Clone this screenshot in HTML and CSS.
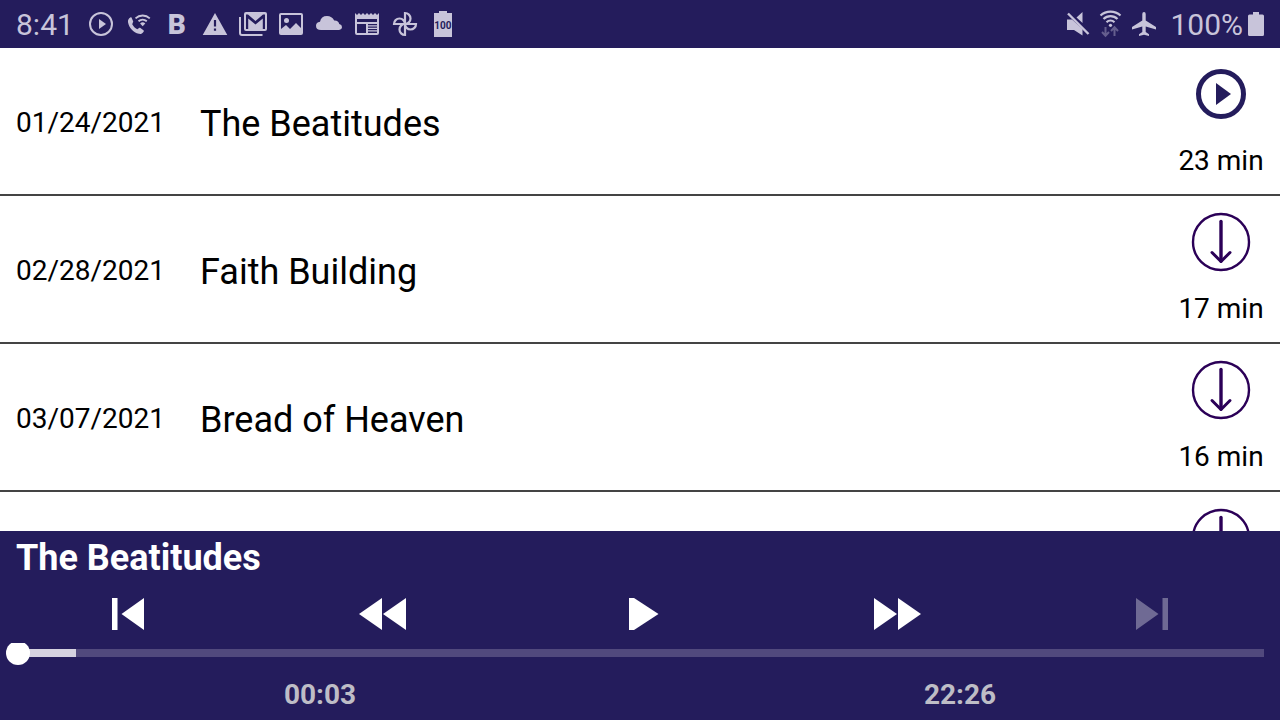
FILE: index.html
```html
<!DOCTYPE html>
<html lang="en">
<head>
<meta charset="utf-8">
<meta name="viewport" content="width=device-width, initial-scale=1">
<title>The Beatitudes</title>
<link rel="stylesheet" href="styles.css">
</head>
<body>
<svg class="sprite" aria-hidden="true">
  <symbol id="download" viewBox="0 0 60 60">
    <g fill="none" stroke="#2b0057">
      <circle cx="30" cy="30" r="28" stroke-width="2.4"/>
      <path d="M30 9.5V49" stroke-width="3.4" stroke-linecap="round"/>
      <path d="M21 40.5 30 49.5 39 40.5" stroke-width="3" stroke-linecap="round" stroke-linejoin="round"/>
    </g>
  </symbol>
</svg>

<header class="status">
  <time class="status-text">8:41</time>
  <div class="notices">
    <svg class="glyph" viewBox="0 0 28 28"><circle cx="14" cy="14" r="11" fill="none" stroke="currentColor" stroke-width="2"/><path d="M12 9v10l7-5z"/></svg>
    <svg class="glyph" viewBox="0 0 28 28"><path transform="translate(.4 4.6) scale(.9)" d="M7.6 10.8c1.4 2.6 3 4.200 5.600 5.600l2-1.600c.5-.4 1-.4 1.500 0l3.300 2.600c.6.500.7 1 .2 1.600-1.500 2-3.200 3-5.200 2.400C8.600 19.800 4 14.500 2.900 8.500 2.500 6.200 3.600 4.300 5.500 3.200c.6-.3 1.100-.2 1.400.4l1.700 3.800c.2.500.1.900-.3 1.300z"/><path d="M10.500 8.300a10.500 10.500 0 0 1 14.300 0M13.500 11.300a6.300 6.300 0 0 1 8.300 0" fill="none" stroke="currentColor" stroke-width="1.800"/><path d="M17.700 16.200l-2.600-2.600a3.700 3.700 0 0 1 5.200 0z"/></svg>
    <span class="letter">B</span>
    <svg class="glyph" viewBox="0 0 28 28"><path fill-rule="evenodd" d="M14 3 26.300 25H1.700zM12.900 10v6.500h2.200V10zm0 8.500v2.300h2.200v-2.300z"/></svg>
    <svg class="glyph" viewBox="0 0 28 28"><path d="M1 7v16q0 2 2 2h20.500" fill="none" stroke="currentColor" stroke-width="2"/><path fill-rule="evenodd" d="M7 2h19q2 0 2 2v15q0 2-2 2H7q-2 0-2-2V4q0-2 2-2zM7 4.500V19h2.200V8.500l7.300 6 7.300-6V19H26V4.500h-2L16.500 11 9 4.500z"/></svg>
    <svg class="glyph" viewBox="0 0 28 28"><path fill-rule="evenodd" d="M4 3h20q2 0 2 2v18q0 2-2 2H4q-2 0-2-2V5q0-2 2-2zm0 2v14l5-4 4 4 6-6 5 5V5z"/><circle cx="9.500" cy="10.500" r="2.500"/></svg>
    <svg class="glyph" viewBox="0 0 28 28"><path d="M6 20q-5 0-5-4.300 0-3.400 4-4Q6 6 12 6q5 0 7.200 4.500 4.300-.3 5 3.500 2.800.6 2.800 3t-3 3z"/></svg>
    <svg class="glyph" viewBox="0 0 28 28"><path fill-rule="evenodd" d="M2 3l2 2 2-2 2 2 2-2 2 2 2-2 2 2 2-2 2 2 2-2 2 2 2-2v20q0 2-2 2H4q-2 0-2-2zM4 9v3h20V9zm0 5v9h9v-9zm11 0v1.200h9V14zm0 2.500v1.200h9v-1.200zm0 2.500v1.200h9V19zm0 2.500V23h9v-1.500z"/></svg>
    <svg class="glyph" viewBox="0 0 28 28"><g fill="none" stroke="currentColor" stroke-width="2.200"><path d="M14 14V3a5.500 5.500 0 0 1 0 11z"/><path d="M14 14V3a5.500 5.500 0 0 1 0 11z" transform="rotate(90 14 14)"/><path d="M14 14V3a5.500 5.500 0 0 1 0 11z" transform="rotate(180 14 14)"/><path d="M14 14V3a5.500 5.500 0 0 1 0 11z" transform="rotate(270 14 14)"/></g></svg>
    <span class="charge">100</span>
  </div>
  <div class="system">
    <svg class="glyph" viewBox="0 0 28 28"><path d="M3 9.500h5L18.500 19v6.500L10 20H3zM18.500 2v11L12.500 7.500z"/><path d="M4 3.500 24.500 24" stroke="currentColor" stroke-width="2.400"/></svg>
    <svg class="glyph" viewBox="0 0 28 28"><path d="M3.500 5.500a15 15 0 0 1 20 0M6.500 9a10 10 0 0 1 14 0M9.500 12.200a6 6 0 0 1 8 0" fill="none" stroke="currentColor" stroke-width="2.200"/><circle cx="13.500" cy="15.300" r="1.600"/><path d="M8.500 17v8.500M5 22l3.500 3.700L12 22M17.500 26v-8.500M14 21l3.500-3.700L21 21" fill="none" stroke="currentColor" stroke-width="2" opacity=".4"/></svg>
    <svg class="glyph" viewBox="0 0 28 28"><path d="M14 2q1.700 0 1.700 2v6.500L26 17v2.500l-10.300-3V22l3.300 2.300V26l-5-1.200L9 26v-1.700l3.300-2.300v-5.500L2 19.500V17l10.300-6.500V4q0-2 1.700-2z"/></svg>
    <span class="status-text">100%</span>
    <svg class="battery" viewBox="0 0 16 28"><path d="M5 2h6v2.500h3.500q1.500 0 1.500 1.500v18.500q0 1.500-1.500 1.500h-13Q0 26 0 24.500V6q0-1.500 1.500-1.500H5z"/></svg>
  </div>
</header>

<main class="list">
  <article class="row">
    <time class="date">01/24/2021</time>
    <h2 class="title">The Beatitudes</h2>
    <div class="action">
      <button class="icon-button" type="button" aria-label="Play"><svg class="action-icon" viewBox="0 0 60 60"><circle cx="30" cy="30" r="22.500" fill="none" stroke="#241c5c" stroke-width="5"/><path d="M25 19v22l15-11z" fill="#241c5c"/></svg></button>
      <span class="length">23 min</span>
    </div>
  </article>
  <article class="row">
    <time class="date">02/28/2021</time>
    <h2 class="title">Faith Building</h2>
    <div class="action">
      <button class="icon-button" type="button" aria-label="Download"><svg class="action-icon"><use href="#download"/></svg></button>
      <span class="length">17 min</span>
    </div>
  </article>
  <article class="row">
    <time class="date">03/07/2021</time>
    <h2 class="title">Bread of Heaven</h2>
    <div class="action">
      <button class="icon-button" type="button" aria-label="Download"><svg class="action-icon"><use href="#download"/></svg></button>
      <span class="length">16 min</span>
    </div>
  </article>
  <article class="row">
    <div class="action">
      <button class="icon-button" type="button" aria-label="Download"><svg class="action-icon"><use href="#download"/></svg></button>
    </div>
  </article>
</main>

<footer class="player">
  <h1 class="now">The Beatitudes</h1>
  <div class="controls">
    <button class="control" type="button" aria-label="Previous"><svg class="control-icon" viewBox="0 0 48 32"><path d="M8 0h5.500v32H8zM40 0v32L17.500 16z"/></svg></button>
    <button class="control" type="button" aria-label="Rewind"><svg class="control-icon" viewBox="0 0 48 32"><path d="M22 0v32L-1 16zM46 0v32L23 16z"/></svg></button>
    <button class="control" type="button" aria-label="Play"><svg class="control-icon" viewBox="0 0 48 32"><path d="M13 0h5l24.500 16L18 32h-5z"/></svg></button>
    <button class="control" type="button" aria-label="Fast forward"><svg class="control-icon" viewBox="0 0 48 32"><path d="M2 0v32l23-16zM26 0v32l23-16z"/></svg></button>
    <button class="control" type="button" aria-label="Next" disabled><svg class="control-icon" viewBox="0 0 48 32"><path d="M8 0v32l22.500-16zM34.500 0H40v32h-5.500z"/></svg></button>
  </div>
  <input class="seek" type="range" min="0" max="1346" value="2" aria-label="Position" style="--buffered: 4.8%">
  <div class="times">
    <span>00:03</span>
    <span>22:26</span>
  </div>
</footer>
</body>
</html>
```
FILE: styles.css
```css
* {
  box-sizing: border-box;
}

body {
  margin: 0;
  height: 100vh;
  display: flex;
  flex-direction: column;
  font-family: Roboto, "Liberation Sans", sans-serif;
  font-size: 28px;
  color: #000;
  background: #fff;
}

h1,
h2 {
  margin: 0;
  font-size: 36px;
  line-height: 42px;
}

button {
  padding: 0;
  border: 0;
  background: none;
  color: inherit;
}

svg {
  display: block;
  fill: currentColor;
  overflow: visible;
}

.sprite {
  position: absolute;
  width: 0;
  height: 0;
}

.status {
  flex: none;
  display: flex;
  align-items: center;
  gap: 13px;
  padding: 0 16px;
  height: 48px;
  background: #241c5c;
  color: #c8c4da;
}

.status-text {
  padding-top: 2px;
  font-size: 30px;
  line-height: 46px;
}

.notices {
  display: flex;
  align-items: center;
  gap: 10px;
}

.glyph {
  width: 28px;
  height: 28px;
}

.letter {
  width: 28px;
  padding-top: 2px;
  text-align: center;
  font-weight: 900;
  line-height: 28px;
}

.charge {
  width: 18px;
  margin: 0 5px;
  padding-top: 4px;
  font-size: 10px;
  font-weight: 700;
  line-height: 22px;
  text-align: center;
  color: #241c5c;
  background:
    linear-gradient(#c8c4da, #c8c4da) center top / 8px 3px no-repeat,
    linear-gradient(#c8c4da, #c8c4da) center bottom / 100% 24px no-repeat;
}

.system {
  display: flex;
  align-items: center;
  gap: 5px;
  margin-left: auto;
}

.system .status-text {
  margin-left: 7px;
}

.battery {
  width: 16px;
  height: 28px;
}

.list {
  flex: 1;
  min-height: 0;
  overflow: hidden;
}

.row {
  display: flex;
  align-items: center;
  height: 148px;
  padding: 0 16px;
  border-bottom: 2px solid #444;
}

.date {
  width: 184px;
  padding-top: 2px;
}

.title {
  padding-top: 6px;
  font-weight: 400;
}

.action {
  align-self: flex-start;
  display: flex;
  flex-direction: column;
  align-items: center;
  gap: 19px;
  width: 86px;
  margin-left: auto;
  padding-top: 16px;
}

.icon-button,
.action-icon {
  width: 60px;
  height: 60px;
}

.length {
  line-height: 36px;
  white-space: nowrap;
}

.player {
  flex: none;
  display: flex;
  flex-direction: column;
  padding: 6px 0 7px;
  background: #241c5c;
  color: #fff;
}

.now {
  padding: 0 16px;
}

.controls {
  display: grid;
  grid-template-columns: repeat(5, 1fr);
  margin-top: 6px;
}

.control {
  display: flex;
  align-items: center;
  justify-content: center;
  height: 58px;
}

.control:disabled {
  opacity: .34;
}

.control-icon {
  width: 48px;
  height: 32px;
}

.seek {
  appearance: none;
  height: 20px;
  margin: 0 4px;
  background: none;
  clip-path: inset(0 0 -4px 0);
}

.seek::-webkit-slider-runnable-track {
  height: 24px;
  background: linear-gradient(90deg, #d5d2e0 var(--buffered), #51497d var(--buffered)) center / calc(100% - 24px) 8px no-repeat;
}

.seek::-webkit-slider-thumb {
  appearance: none;
  width: 24px;
  height: 24px;
  border-radius: 50%;
  background: #fff;
}

.times {
  display: grid;
  grid-template-columns: 1fr 1fr;
  margin-top: 14px;
  font-weight: 700;
  line-height: 36px;
  text-align: center;
  color: #bebdc6;
}
```
